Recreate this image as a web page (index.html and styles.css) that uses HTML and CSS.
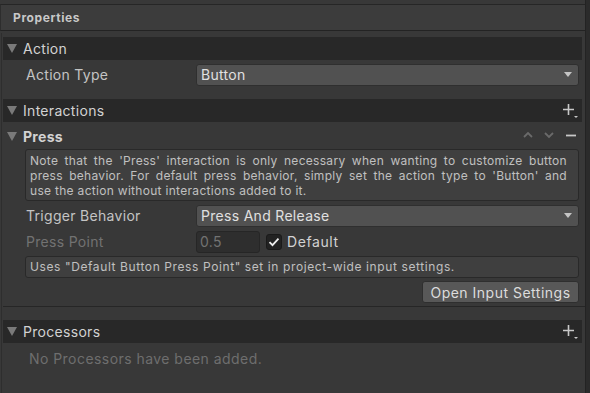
FILE: index.html
```html
<!DOCTYPE html>
<html lang="en">
<head>
  <meta charset="UTF-8" />
  <title>Properties</title>
  <link rel="stylesheet" href="styles.css">
</head>
<body>
  <div class="window">
    <div class="tab-header">Properties</div>
    <div class="panel">

      <div class="bar"><span class="fold"></span>Action</div>
      <div class="row">
        <label>Action Type</label>
        <div class="dropdown">Button<span class="caret"></span></div>
      </div>

      <div class="bar bar-gap">
        <span class="fold"></span>Interactions
        <svg class="add" width="16" height="16" viewBox="0 0 16 16">
          <path d="M1 6.5h11M6.5 1v11" stroke="#c8c8c8" stroke-width="1.6" fill="none"/>
          <path d="M12 13h4l-2 2z" fill="#c8c8c8"/>
        </svg>
      </div>

      <div class="item-head">
        <span class="fold"></span><strong>Press</strong>
        <div class="item-tools">
          <svg width="10" height="8" viewBox="0 0 10 8"><path d="M1 6l4-4 4 4" stroke="#6a6a6a" stroke-width="1.8" fill="none"/></svg>
          <svg width="10" height="8" viewBox="0 0 10 8"><path d="M1 2l4 4 4-4" stroke="#6a6a6a" stroke-width="1.8" fill="none"/></svg>
          <svg width="12" height="8" viewBox="0 0 12 8"><path d="M1 4.5h10" stroke="#c8c8c8" stroke-width="1.8"/></svg>
        </div>
      </div>

      <div class="item-body">
        <div class="help help-note">
          <span class="line">Note that the 'Press' interaction is only necessary when wanting to customize button</span>
          <span class="line">press behavior. For default press behavior, simply set the action type to 'Button' and</span>
          <span class="line last">use the action without interactions added to it.</span>
        </div>
        <div class="row row-inner">
          <label>Trigger Behavior</label>
          <div class="dropdown">Press And Release<span class="caret"></span></div>
        </div>
        <div class="row row-inner">
          <label class="disabled">Press Point</label>
          <div class="value-group">
            <div class="number-field">0.5</div>
            <span class="checkbox">
              <svg width="12" height="10" viewBox="0 0 12 10"><path d="M1.5 5.2l3 3 6-6.5" stroke="#ececec" stroke-width="1.8" fill="none"/></svg>
            </span>
            <span class="check-label">Default</span>
          </div>
        </div>
        <div class="help help-single">Uses "Default Button Press Point" set in project-wide input settings.</div>
        <div class="button-row">
          <button>Open Input Settings</button>
        </div>
      </div>

      <div class="separator"></div>

      <div class="bar">
        <span class="fold"></span>Processors
        <svg class="add" width="16" height="16" viewBox="0 0 16 16">
          <path d="M1 6.5h11M6.5 1v11" stroke="#c8c8c8" stroke-width="1.6" fill="none"/>
          <path d="M12 13h4l-2 2z" fill="#c8c8c8"/>
        </svg>
      </div>
      <div class="empty">No Processors have been added.</div>

    </div>
  </div>
</body>
</html>
```

FILE: styles.css
```css
* {
  box-sizing: border-box;
}
body {
  margin: 0;
  background: #2b2b2b;
  font-family: Inter, "Noto Sans", sans-serif;
  color: #c4c4c4;
  font-size: 14px;
  letter-spacing: 0.3px;
}
.window {
  width: 586px;
  height: 393px;
  background: #383838;
  border-right: 1px solid #232323;
  padding-top: 4px;
  display: flex;
  flex-direction: column;
}
.tab-header {
  height: 27px;
  background: #3c3c3c;
  border-top: 1px solid #262626;
  border-bottom: 1px solid #232323;
  border-left: 1px solid #2d2d2d;
  padding-left: 12px;
  font-size: 12px;
  font-weight: 700;
  line-height: 25px;
  letter-spacing: 0.6px;
  color: #c8c8c8;
}
.panel {
  flex: 1;
  margin-top: 2px;
  margin-left: 1px;
  border-left: 1px solid #2e2e2e;
  padding: 4px 3px 0 1px;
}
.bar {
  height: 23px;
  background: #282828;
  display: flex;
  align-items: center;
  font-size: 14px;
  color: #d2d2d2;
  padding-left: 4px;
}
.bar-gap {
  margin-top: 13px;
}
.fold {
  width: 0;
  height: 0;
  border-left: 5px solid transparent;
  border-right: 5px solid transparent;
  border-top: 9px solid #7a7a7a;
  margin-right: 6px;
}
.add {
  margin-left: auto;
  margin-right: 4px;
  margin-top: 1px;
}
.row {
  display: flex;
  align-items: center;
  height: 26px;
  padding-top: 3px;
  padding-left: 23px;
}
.row label {
  width: 170px;
  flex: none;
}
.row label.disabled {
  color: #727272;
}
.dropdown {
  flex: 1;
  height: 22px;
  background: #515151;
  border: 1px solid #2f2f2f;
  border-radius: 3px;
  padding-left: 4px;
  display: flex;
  align-items: center;
  color: #e0e0e0;
  margin-right: 3px;
}
.caret {
  margin-left: auto;
  margin-right: 6px;
  width: 0;
  height: 0;
  border-left: 4px solid transparent;
  border-right: 4px solid transparent;
  border-top: 5px solid #c4c4c4;
}
.item-head {
  height: 26px;
  display: flex;
  align-items: center;
  padding-left: 4px;
  padding-top: 3px;
}
.item-head strong {
  font-size: 14px;
  color: #d2d2d2;
  font-weight: 700;
}
.item-tools {
  margin-left: auto;
  display: flex;
  align-items: center;
  gap: 11px;
  margin-right: 5px;
  margin-bottom: 3px;
}
.item-body {
  padding-left: 22px;
  padding-right: 3px;
}
.help {
  background: #3f3f3f;
  border: 1px solid #292929;
  border-radius: 3px;
  font-size: 12px;
  line-height: 15px;
  padding: 2px 4px 3px 4px;
  color: #c0c0c0;
  letter-spacing: 0.4px;
  white-space: nowrap;
  overflow: hidden;
  margin-top: 1px;
}
.help-note {
  padding: 3px 11px 2px 4px;
  letter-spacing: 0.3px;
  white-space: normal;
}
.help-note .line {
  display: block;
  text-align: justify;
  text-align-last: justify;
  white-space: nowrap;
}
.help-note .line.last {
  text-align-last: left;
}
.help-single {
  height: 22px;
  margin-top: 3px;
  line-height: 16px;
  letter-spacing: 0.6px;
}
.row-inner {
  padding-left: 1px;
  margin-right: -3px;
}
.value-group {
  flex: 1;
  display: flex;
  align-items: center;
}
.number-field {
  width: 64px;
  height: 22px;
  background: #2e2e2e;
  border: 1px solid #262626;
  border-radius: 3px;
  padding-left: 3px;
  line-height: 20px;
  color: #727272;
}
.checkbox {
  width: 16px;
  height: 16px;
  margin-left: 6px;
  background: #222222;
  border: 1px solid #1a1a1a;
  border-radius: 3px;
  display: flex;
  align-items: center;
  justify-content: center;
}
.check-label {
  margin-left: 5px;
  color: #d2d2d2;
  font-size: 14px;
  letter-spacing: 0.6px;
}
.button-row {
  display: flex;
  justify-content: flex-end;
  margin-top: 3px;
}
button {
  font-family: inherit;
  font-size: 14px;
  letter-spacing: 0.5px;
  color: #dcdcdc;
  background: #585858;
  border: 1px solid #2f2f2f;
  border-radius: 3px;
  height: 22px;
  width: 157px;
  padding: 0;
}
.separator {
  height: 1px;
  background: #262626;
  margin: 3px -3px 13px 0;
}
.empty {
  padding: 7px 0 0 26px;
  color: #6e6e6e;
  font-size: 14px;
  letter-spacing: 0.45px;
}
```
